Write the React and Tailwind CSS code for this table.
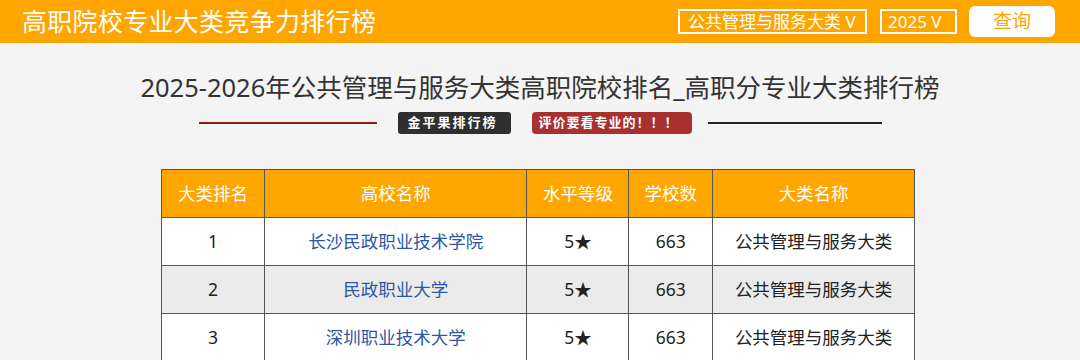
export default function App() {
  const font = { fontFamily: '"Noto Sans", "Noto Sans CJK SC", sans-serif' };
  const rows = [
    { r: 1, name: "长沙民政职业技术学院", bg: "bg-white" },
    { r: 2, name: "民政职业大学", bg: "bg-[#ebebeb]" },
    { r: 3, name: "深圳职业技术大学", bg: "bg-white" },
  ];
  const cell = "border border-[#555] text-center align-middle";
  return (
    <div className="w-[1080px] h-[360px] overflow-hidden bg-[#f4f4f4]" style={font}>
      <div className="h-[43px] bg-[#ffa500] flex items-center px-[22px]">
        <div className="text-white text-[25px] leading-none tracking-[0.3px]">高职院校专业大类竞争力排行榜</div>
        <div className="ml-auto flex items-center">
          <div className="h-[25px] w-[189px] border-2 border-white text-white text-[17px] leading-none flex items-center pl-[8px]">
            公共管理与服务大类 V
          </div>
          <div className="ml-[13px] h-[25px] w-[77px] border-2 border-white text-white text-[17px] leading-none flex items-center pl-[6px]">
            2025 V
          </div>
          <div className="ml-[12px] mr-[3px] h-[31px] w-[86px] bg-white rounded-[6px] text-[#ffa500] text-[19px] flex items-center justify-center">
            查询
          </div>
        </div>
      </div>
      <div className="text-center text-[25.5px] text-[#333] mt-[27px] leading-[34px]">
        2025-2026年公共管理与服务大类高职院校排名_高职分专业大类排行榜
      </div>
      <div className="flex items-center justify-center mt-[8px]">
        <div className="w-[178px] h-[2px] bg-[#8b1a1a]"></div>
        <div className="ml-[21px] w-[113px] h-[22px] pl-[10px] bg-[#2f2f2f] rounded-[3px] text-white text-[13px] font-bold flex items-center tracking-[2px]">金平果排行榜</div>
        <div className="ml-[21px] w-[160px] h-[22px] pl-[7px] bg-[#a8302f] rounded-[4px] text-white text-[13px] font-bold flex items-center tracking-[1px]">评价要看专业的！！！</div>
        <div className="ml-[16px] w-[174px] h-[2px] bg-[#222]"></div>
      </div>
      <table className="ml-[161px] mt-[35px] border-collapse text-[17.5px]" style={{ width: 754 }}>
        <thead>
          <tr className="h-[48px] bg-[#ffa500] text-white">
            <th className={`${cell} font-normal w-[103px]`}>大类排名</th>
            <th className={`${cell} font-normal w-[263px]`}>高校名称</th>
            <th className={`${cell} font-normal w-[102px]`}>水平等级</th>
            <th className={`${cell} font-normal w-[84px]`}>学校数</th>
            <th className={`${cell} font-normal w-[202px]`}>大类名称</th>
          </tr>
        </thead>
        <tbody>
          {rows.map((row) => (
            <tr key={row.r} className={`h-[48px] ${row.bg} text-[#222]`}>
              <td className={cell}>{row.r}</td>
              <td className={`${cell} text-[#2b57a5]`}>{row.name}</td>
              <td className={cell}>5★</td>
              <td className={cell}>663</td>
              <td className={cell}>公共管理与服务大类</td>
            </tr>
          ))}
        </tbody>
      </table>
    </div>
  );
}
